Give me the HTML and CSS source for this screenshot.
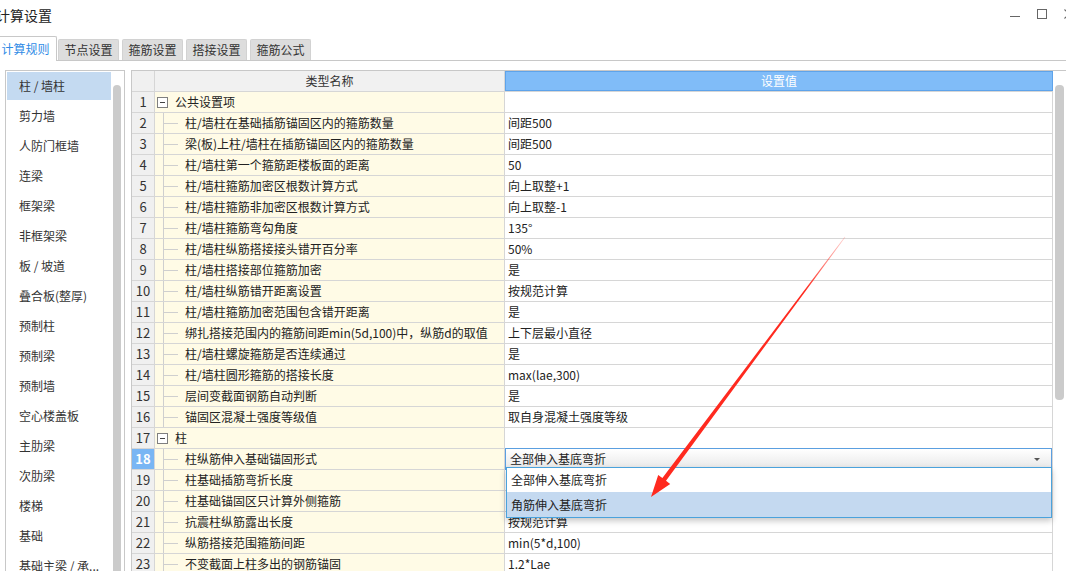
FILE: index.html
```html
<!DOCTYPE html>
<html lang="zh-CN">
<head>
<meta charset="utf-8">
<title>计算设置</title>
<link rel="stylesheet" href="styles.css">
</head>
<body>
<div class="window">
  <header class="titlebar">
    <div class="title">计算设置</div>
    <div class="controls">
      <span class="ctl min"></span>
      <span class="ctl max"></span>
      <svg class="ctl close" width="10" height="10" viewBox="0 0 10 10"><path d="M0.5 0.5L9.5 9.5M9.5 0.5L0.5 9.5" stroke="#666" stroke-width="1.1" fill="none"/></svg>
    </div>
  </header>
  <nav class="tabbar">
    <div class="tab active">计算规则</div>
    <div class="tab first">节点设置</div>
    <div class="tab">箍筋设置</div>
    <div class="tab">搭接设置</div>
    <div class="tab">箍筋公式</div>
  </nav>
  <main class="main">
    <aside class="side">
      <ul class="side-list">
        <li class="side-item selected">柱 / 墙柱</li>
        <li class="side-item">剪力墙</li>
        <li class="side-item">人防门框墙</li>
        <li class="side-item">连梁</li>
        <li class="side-item">框架梁</li>
        <li class="side-item">非框架梁</li>
        <li class="side-item">板 / 坡道</li>
        <li class="side-item">叠合板(整厚)</li>
        <li class="side-item">预制柱</li>
        <li class="side-item">预制梁</li>
        <li class="side-item">预制墙</li>
        <li class="side-item">空心楼盖板</li>
        <li class="side-item">主肋梁</li>
        <li class="side-item">次肋梁</li>
        <li class="side-item">楼梯</li>
        <li class="side-item">基础</li>
        <li class="side-item">基础主梁 / 承...</li>
      </ul>
      <div class="side-scroll"><div class="side-thumb"></div></div>
    </aside>
    <section class="grid-wrap">
      <div class="grid">
        <div class="row head"><div class="c num"></div><div class="c name center">类型名称</div><div class="c val center">设置值</div></div>
        <div class="row"><div class="c num">1</div><div class="c name"><span class="tog"></span>公共设置项</div><div class="c val"></div></div>
        <div class="row"><div class="c num">2</div><div class="c name"><span class="branch"></span>柱/墙柱在基础插筋锚固区内的箍筋数量</div><div class="c val">间距500</div></div>
        <div class="row"><div class="c num">3</div><div class="c name"><span class="branch"></span>梁(板)上柱/墙柱在插筋锚固区内的箍筋数量</div><div class="c val">间距500</div></div>
        <div class="row"><div class="c num">4</div><div class="c name"><span class="branch"></span>柱/墙柱第一个箍筋距楼板面的距离</div><div class="c val">50</div></div>
        <div class="row"><div class="c num">5</div><div class="c name"><span class="branch"></span>柱/墙柱箍筋加密区根数计算方式</div><div class="c val">向上取整+1</div></div>
        <div class="row"><div class="c num">6</div><div class="c name"><span class="branch"></span>柱/墙柱箍筋非加密区根数计算方式</div><div class="c val">向上取整-1</div></div>
        <div class="row"><div class="c num">7</div><div class="c name"><span class="branch"></span>柱/墙柱箍筋弯勾角度</div><div class="c val">135°</div></div>
        <div class="row"><div class="c num">8</div><div class="c name"><span class="branch"></span>柱/墙柱纵筋搭接接头错开百分率</div><div class="c val">50%</div></div>
        <div class="row"><div class="c num">9</div><div class="c name"><span class="branch"></span>柱/墙柱搭接部位箍筋加密</div><div class="c val">是</div></div>
        <div class="row"><div class="c num">10</div><div class="c name"><span class="branch"></span>柱/墙柱纵筋错开距离设置</div><div class="c val">按规范计算</div></div>
        <div class="row"><div class="c num">11</div><div class="c name"><span class="branch"></span>柱/墙柱箍筋加密范围包含错开距离</div><div class="c val">是</div></div>
        <div class="row"><div class="c num">12</div><div class="c name"><span class="branch"></span>绑扎搭接范围内的箍筋间距min(5d,100)中，纵筋d的取值</div><div class="c val">上下层最小直径</div></div>
        <div class="row"><div class="c num">13</div><div class="c name"><span class="branch"></span>柱/墙柱螺旋箍筋是否连续通过</div><div class="c val">是</div></div>
        <div class="row"><div class="c num">14</div><div class="c name"><span class="branch"></span>柱/墙柱圆形箍筋的搭接长度</div><div class="c val">max(lae,300)</div></div>
        <div class="row"><div class="c num">15</div><div class="c name"><span class="branch"></span>层间变截面钢筋自动判断</div><div class="c val">是</div></div>
        <div class="row"><div class="c num">16</div><div class="c name"><span class="branch"></span>锚固区混凝土强度等级值</div><div class="c val">取自身混凝土强度等级</div></div>
        <div class="row"><div class="c num">17</div><div class="c name"><span class="tog"></span>柱</div><div class="c val"></div></div>
        <div class="row"><div class="c num sel">18</div><div class="c name"><span class="branch"></span>柱纵筋伸入基础锚固形式</div>
          <div class="c val combo-cell">
            <div class="combo"><span>全部伸入基底弯折</span><span class="caret"></span></div>
            <div class="combo-list">
              <div class="opt">全部伸入基底弯折</div>
              <div class="opt hl">角筋伸入基底弯折</div>
            </div>
          </div>
        </div>
        <div class="row"><div class="c num">19</div><div class="c name"><span class="branch"></span>柱基础插筋弯折长度</div><div class="c val"></div></div>
        <div class="row"><div class="c num">20</div><div class="c name"><span class="branch"></span>柱基础锚固区只计算外侧箍筋</div><div class="c val"></div></div>
        <div class="row"><div class="c num">21</div><div class="c name"><span class="branch"></span>抗震柱纵筋露出长度</div><div class="c val">按规范计算</div></div>
        <div class="row"><div class="c num">22</div><div class="c name"><span class="branch"></span>纵筋搭接范围箍筋间距</div><div class="c val">min(5*d,100)</div></div>
        <div class="row"><div class="c num">23</div><div class="c name"><span class="branch"></span>不变截面上柱多出的钢筋锚固</div><div class="c val">1.2*Lae</div></div>
      </div>
      <div class="vscroll"><div class="vthumb"></div></div>
    </section>
  </main>
  <svg class="arrow" width="1066" height="571" viewBox="0 0 1066 571">
    <defs>
      <linearGradient id="fade" gradientUnits="userSpaceOnUse" x1="845" y1="237" x2="805" y2="291">
        <stop offset="0" stop-color="#ff2a1f" stop-opacity="0.2"/>
        <stop offset="1" stop-color="#ff2a1f" stop-opacity="1"/>
      </linearGradient>
    </defs>
    <polygon fill="url(#fade)" points="845.3,237.2 666.0,480.7 670.2,483.9 651,497 658.2,474.9 662.4,478.1 844.7,236.8"/>
  </svg>
</div>
</body>
</html>
```
FILE: styles.css
```css
* { box-sizing: border-box; margin: 0; padding: 0; }
html, body { width: 1066px; height: 571px; overflow: hidden; background: #fff; }
body { font-family: "Noto Sans CJK SC", "Noto Sans", sans-serif; font-size: 12px; color: #222; }

.window { position: relative; width: 1066px; height: 571px; overflow: hidden; }

.titlebar { height: 36px; display: flex; justify-content: space-between; }
.title { font-size: 14px; line-height: 30px; margin-left: -4px; color: #222; }
.controls { display: flex; gap: 17px; padding-top: 9px; margin-right: -8px; }
.ctl { display: block; width: 10px; height: 10px; }
.ctl.min { height: 8px; border-bottom: 1px solid #666; }
.ctl.max { border: 1px solid #666; }

.tabbar { height: 25px; display: flex; align-items: flex-end; border-bottom: 1px solid #c8c8c8; }
.tab { width: 61px; height: 21px; margin-left: 3px; background: #dddddd; border: 1px solid #d2d2d2; border-bottom: none; border-radius: 2px 2px 0 0; line-height: 19px; text-align: center; color: #333; font-size: 12px; }
.tab.first { margin-left: 1px; }
.tab.active { width: 63px; height: 25px; margin-left: -6px; margin-bottom: -1px; background: #fff; border-color: #c8c8c8; color: #2f8be6; line-height: 23px; }

.main { display: flex; padding-top: 9px; height: 510px; }

.side { margin-left: 5px; width: 120px; height: 530px; flex: none; border: 1px solid #c8c8c8; display: flex; padding: 1px 3px 0 1px; }
.side-list { list-style: none; width: 104px; flex: none; }
.side-item { height: 28px; margin-bottom: 2px; line-height: 28px; padding-left: 12px; color: #333; white-space: nowrap; overflow: hidden; }
.side-item.selected { background: #c4daf1; }
.side-scroll { margin-left: 2px; width: 8px; flex: none; padding-top: 13px; }
.side-thumb { height: 600px; background: #cbcbcb; border-radius: 4px 4px 0 0; }

.grid-wrap { margin-left: 6px; flex: 1; height: 530px; display: flex; border-top: 1px solid #c8c8c8; border-left: 1px solid #c8c8c8; }
.grid { width: 921px; flex: none; }
.row { display: flex; height: 21px; border-bottom: 1px solid #d6d6d6; }
.c { height: 20px; border-right: 1px solid #d6d6d6; line-height: 20px; white-space: nowrap; }
.c.num { width: 23px; background: #f0f0f0; text-align: center; font-size: 13px; color: #333; }
.c.num.sel { background: #79b6f4; color: #fff; font-weight: bold; }
.c.name { width: 350px; background: #fffbe6; display: flex; align-items: center; color: #222; }
.c.val { width: 548px; padding-left: 3px; color: #222; }
.c.center { justify-content: center; text-align: center; padding-left: 0; }
.row.head .c.name { background: #f1f1f1; color: #333; }
.row.head .c.val { background: #80bcf8; color: #fff; border: 1px solid #5ea3ea; line-height: 18px; }

.tog { width: 11px; height: 11px; flex: none; margin: 0 7px 0 2px; border: 1px solid #7f7f7f; background: #fff; display: flex; align-items: center; justify-content: center; }
.tog::after { content: ""; width: 5px; height: 1px; background: #444; }
.branch { width: 30px; height: 20px; flex: none;
  background:
    linear-gradient(#cfcfcf, #cfcfcf) 8px 0 / 1px 100% no-repeat,
    linear-gradient(#cfcfcf, #cfcfcf) 8px 10px / 15px 1px no-repeat; }

.combo-cell { position: relative; }
.combo { position: absolute; left: 0; right: 0; top: -1px; height: 22px; border: 1px solid #5b9fe0; background: linear-gradient(#ffffff, #e8e8e8); display: flex; align-items: center; justify-content: space-between; padding-left: 4px; color: #222; }
.caret { width: 0; height: 0; border-left: 3px solid transparent; border-right: 3px solid transparent; border-top: 3px solid #555; margin-right: 11px; }
.combo-list { position: absolute; left: 1px; right: 0; top: 18px; border: 1px solid #4aa2dc; background: #fff; box-shadow: 0 3px 6px rgba(0,0,0,0.22); z-index: 2; }
.opt { height: 24px; line-height: 24px; padding-left: 4px; color: #222; }
.opt.hl { height: 25px; line-height: 25px; background: #c4d9f0; }

.vscroll { flex: 1; padding: 14px 0 0 2px; }
.vthumb { width: 9px; height: 315px; background: #cbcbcb; border-radius: 4px; }

.arrow { position: absolute; left: 0; top: 0; pointer-events: none; z-index: 5; }
```
